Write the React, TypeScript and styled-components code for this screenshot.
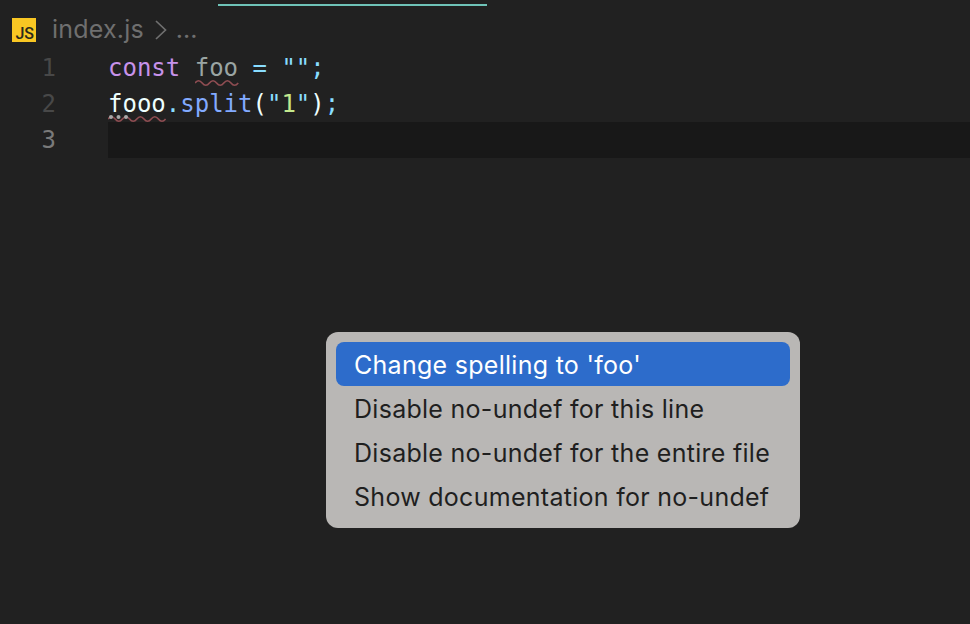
import React from "react";
import styled, { createGlobalStyle } from "styled-components";

const Global = createGlobalStyle`
  html, body { margin: 0; padding: 0; background: #212121; }
  #root { width: 970px; height: 624px; overflow: hidden; }
`;
const Page = styled.div`
  position: relative;
  width: 970px;
  height: 624px;
  background: #212121;
  overflow: hidden;
`;
const TabBar = styled.div`
  height: 11px;
  padding: 4px 0 0 218px;
  box-sizing: border-box;
`;
const TabLine = styled.div`
  width: 269px;
  height: 2px;
  background: #6fc3b8;
`;
const Crumbs = styled.div`
  height: 37px;
  display: flex;
  align-items: center;
  padding-left: 12px;
  font: 25px/37px "Inter", "Liberation Sans", sans-serif;
  color: #6f6f6f;
`;
const JsBadge = styled.div`
  width: 24px;
  height: 24px;
  margin-right: 16px;
  background: #f9c723;
  position: relative;
  flex: none;
  margin-top: 1px;
`;
const JsText = styled.span`
  position: absolute;
  right: 2px;
  bottom: 0;
  font: 500 16px/16px "Roboto", "Liberation Sans", sans-serif;
  color: #2a2a1c;
`;
const CrumbName = styled.span`
  letter-spacing: 0.2px;
`;
const Chevron = styled.svg`
  margin: 0 9px 0 11px;
  flex: none;
`;
const Editor = styled.div`
  padding-top: 2px;
  font: 24px/36px "DejaVu Sans Mono", monospace;
`;
const Line = styled.div`
  display: flex;
  height: 36px;
  position: relative;
`;
const Gutter = styled.div<{ $active?: boolean }>`
  width: 56px;
  flex: none;
  text-align: right;
  color: ${(p) => (p.$active ? "#7a7a7a" : "#484848")};
`;
const Code = styled.div<{ $active?: boolean }>`
  margin-left: 52px;
  flex: 1;
  white-space: pre;
  background: ${(p) => (p.$active ? "#181818" : "transparent")};
`;
const Tok = styled.span<{ $c: string }>`
  color: ${(p) => p.$c};
`;
const Squig = styled.span`
  position: relative;
  display: inline-block;
`;
const Wave = styled.svg`
  position: absolute;
  left: 0;
  top: 28px;
`;
const Dots = styled.svg`
  position: absolute;
  left: 0;
  top: 28px;
`;
const Menu = styled.div`
  position: absolute;
  left: 326px;
  top: 332px;
  width: 474px;
  height: 196px;
  box-sizing: border-box;
  padding: 10px;
  background: #b9b7b5;
  border-radius: 12px;
  display: flex;
  flex-direction: column;
  font: 25px/46px "Inter", "Liberation Sans", sans-serif;
  letter-spacing: 0.28px;
`;
const Item = styled.div<{ $selected?: boolean }>`
  height: 44px;
  padding-left: 18px;
  border-radius: 8px;
  white-space: nowrap;
  color: ${(p) => (p.$selected ? "#ffffff" : "#1f1f1f")};
  background: ${(p) => (p.$selected ? "#2d6ccb" : "transparent")};
`;

const wavePath = (periods: number) => {
  let d = "M0 5";
  for (let i = 0; i < periods; i++) d += ` q3.6 -4.5 7.2 0 t7.2 0`;
  return d;
};

export default function App() {
  return (
    <Page>
      <Global />
      <TabBar><TabLine /></TabBar>
      <Crumbs>
        <JsBadge><JsText>JS</JsText></JsBadge>
        <CrumbName>index.js</CrumbName>
        <Chevron width="12" height="22" viewBox="0 0 12 22" fill="none">
          <path d="M1 2 L10.5 11 L1 20" stroke="#6f6f6f" strokeWidth="1.7" />
        </Chevron>
        <span>...</span>
      </Crumbs>
      <Editor>
        <Line>
          <Gutter>1</Gutter>
          <Code>
            <Tok $c="#c792ea">const</Tok>{" "}
            <Squig>
              <Tok $c="#9aa5a3">foo</Tok>
              <Wave width="44" height="9" viewBox="0 0 44 9" fill="none">
                <path d={wavePath(3)} stroke="#8f4d52" strokeWidth="1.7" />
              </Wave>
            </Squig>{" "}
            <Tok $c="#89ddff">=</Tok> <Tok $c="#89ddff">""</Tok><Tok $c="#89ddff">;</Tok>
          </Code>
        </Line>
        <Line>
          <Gutter>2</Gutter>
          <Code>
            <Squig>
              <Tok $c="#eeffff">fooo</Tok>
              <Wave width="58" height="9" viewBox="0 0 58 9" fill="none">
                <path d={wavePath(4)} stroke="#8f4d52" strokeWidth="1.7" />
              </Wave>
              <Dots width="24" height="6" viewBox="0 0 24 6">
                <circle cx="3" cy="3" r="2" fill="#a8a8a8" />
                <circle cx="10.5" cy="3" r="2" fill="#a8a8a8" />
                <circle cx="18" cy="3" r="2" fill="#a8a8a8" />
              </Dots>
            </Squig>
            <Tok $c="#89ddff">.</Tok>
            <Tok $c="#82aaff">split</Tok>
            <Tok $c="#eeffff">(</Tok>
            <Tok $c="#89ddff">"</Tok>
            <Tok $c="#c3e88d">1</Tok>
            <Tok $c="#89ddff">"</Tok>
            <Tok $c="#eeffff">)</Tok>
            <Tok $c="#89ddff">;</Tok>
          </Code>
        </Line>
        <Line>
          <Gutter $active>3</Gutter>
          <Code $active />
        </Line>
      </Editor>
      <Menu>
        <Item $selected>Change spelling to 'foo'</Item>
        <Item>Disable no-undef for this line</Item>
        <Item>Disable no-undef for the entire file</Item>
        <Item>Show documentation for no-undef</Item>
      </Menu>
    </Page>
  );
}
